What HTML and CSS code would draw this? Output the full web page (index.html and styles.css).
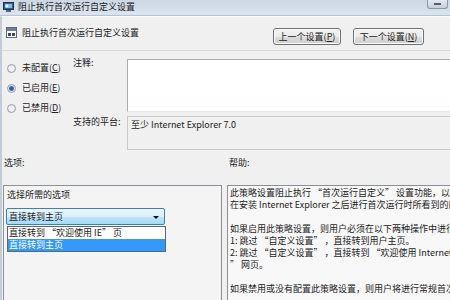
FILE: index.html
```html
<!DOCTYPE html>
<html lang="zh-CN">
<head>
    <meta charset="UTF-8">
    <meta name="viewport" content="width=device-width, initial-scale=1.0">
    <title>阻止执行首次运行自定义设置</title>
    <link rel="stylesheet" href="styles.css">
</head>
<body>
    <div class="titlebar">
        <svg class="app-icon" width="11" height="10" viewBox="0 0 11 10">
            <rect x="0.5" y="0.5" width="10" height="7" fill="#2f5d9a" stroke="#1d3556"/>
            <rect x="2" y="2" width="7" height="4" fill="#8fb7e6"/>
            <circle cx="4" cy="4" r="1.4" fill="#f2f2f2"/>
            <rect x="3" y="8" width="5" height="2" fill="#56647a"/>
        </svg>
        <span class="title">阻止执行首次运行自定义设置</span>
        <span class="min-btn"><span class="dash"></span></span>
    </div>

    <div class="window">
        <div class="header">
            <svg class="policy-icon" width="11" height="11" viewBox="0 0 11 11">
                <rect x="0.5" y="0.5" width="10" height="10" fill="#ffffff" stroke="#5a6a80"/>
                <rect x="1" y="1" width="9" height="3" fill="#6d7f96"/>
                <rect x="2" y="6" width="3" height="3" fill="#3b4a60"/>
                <rect x="6" y="6" width="3" height="3" fill="#3b4a60"/>
            </svg>
            <span class="header-title">阻止执行首次运行自定义设置</span>
            <div class="nav">
                <button class="nav-btn prev">上一个设置(<u>P</u>)</button>
                <button class="nav-btn next">下一个设置(<u>N</u>)</button>
            </div>
        </div>

        <div class="settings">
            <div class="states">
                <label class="radio"><span class="dot"></span><span class="radio-text">未配置(<u>C</u>)</span></label>
                <label class="radio checked"><span class="dot"></span><span class="radio-text">已启用(<u>E</u>)</span></label>
                <label class="radio"><span class="dot"></span><span class="radio-text">已禁用(<u>D</u>)</span></label>
            </div>
            <div class="fields">
                <div class="field-label first">注释:</div>
                <div class="comment"></div>
                <div class="field-label">支持的平台:</div>
                <div class="platform">至少 Internet Explorer 7.0</div>
            </div>
        </div>

        <div class="panes">
            <div class="pane options-pane">
                <div class="pane-label">选项:</div>
                <div class="pane-box options">
                    <div class="option-label">选择所需的选项</div>
                    <div class="combo">
                        <span class="combo-text">直接转到主页</span>
                        <span class="arrow"></span>
                        <ul class="combo-list">
                            <li>直接转到 “欢迎使用 IE” 页</li>
                            <li class="selected">直接转到主页</li>
                        </ul>
                    </div>
                </div>
            </div>
            <div class="pane help-pane">
                <div class="pane-label">帮助:</div>
                <div class="pane-box help">
                    <p>此策略设置阻止执行 “首次运行自定义” 设置功能，以及控制新用户</p>
                    <p>在安装 Internet Explorer 之后进行首次运行时所看到的内容。</p>
                    <p>&nbsp;</p>
                    <p>如果启用此策略设置，则用户必须在以下两种操作中进行选择：</p>
                    <p>1: 跳过 “自定义设置” ，直接转到用户主页。</p>
                    <p>2: 跳过 “自定义设置” ，直接转到 “欢迎使用 Internet Explorer</p>
                    <p>” 网页。</p>
                    <p>&nbsp;</p>
                    <p>如果禁用或没有配置此策略设置，则用户将进行常规首次运行</p>
                </div>
            </div>
        </div>
    </div>
</body>
</html>
```

FILE: styles.css
```css
html, body {
    margin: 0;
    width: 450px;
    height: 300px;
    overflow: hidden;
}
body {
    background-color: #f0f0f0;
    font-family: "Noto Sans CJK SC", "Noto Sans", sans-serif;
    font-size: 9px;
    line-height: 12px;
    color: #222;
}
u {
    text-decoration: underline;
}

/* title bar */
.titlebar {
    display: flex;
    align-items: flex-start;
    height: 15px;
    background: linear-gradient(#cdd8e4, #dbe4ee);
    border-bottom: 1px solid #b7c3d0;
}
.app-icon {
    margin: 2px 0 0 3px;
}
.title {
    margin: 1px 0 0 4px;
    color: #1a1a1a;
}
.min-btn {
    display: flex;
    justify-content: center;
    align-items: center;
    margin-left: auto;
    margin-right: 2px;
    width: 19px;
    height: 8px;
    border: 1px solid #8a97a6;
    border-top: none;
    border-radius: 0 0 3px 3px;
    background: linear-gradient(#e3e9f0, #c6d0dc);
}
.dash {
    width: 7px;
    height: 2px;
    background-color: #ffffff;
    border: 1px solid #55606e;
    box-sizing: border-box;
}

/* window body */
.window {
    border-left: 2px solid #c3cdd9;
    border-top: 1px solid #f7f9fb;
    height: 284px;
}
.header {
    display: flex;
    align-items: flex-start;
    height: 33px;
    border-bottom: 1px solid #d9d9d9;
}
.policy-icon {
    margin: 10px 0 0 4px;
}
.header-title {
    margin: 10px 0 0 5px;
}
.nav {
    display: flex;
    gap: 12px;
    margin: 11px 26px 0 auto;
}
.nav-btn {
    height: 17px;
    padding: 0;
    font-family: inherit;
    font-size: 9px;
    line-height: 12px;
    color: #222;
    border: 1px solid #707070;
    border-radius: 3px;
    background: linear-gradient(#f2f2f2 0%, #ebebeb 50%, #dddddd 51%, #cfcfcf 100%);
    box-shadow: inset 0 0 0 1px #fcfcfc;
}
.prev {
    width: 68px;
}
.next {
    width: 71px;
}

/* state radios and fields */
.settings {
    display: flex;
    padding-top: 8px;
}
.states {
    flex: none;
    display: flex;
    flex-direction: column;
    width: 66px;
    padding-left: 5px;
    margin-top: -1px;
}
.radio {
    display: flex;
    align-items: center;
    gap: 6px;
    height: 20px;
    white-space: nowrap;
}
.dot {
    flex: none;
    width: 7px;
    height: 7px;
    border-radius: 50%;
    border: 1px solid #9aa0a8;
    background: radial-gradient(#ffffff, #dcdfe3);
}
.checked .dot {
    background: radial-gradient(circle, #1f4a8a 0, #3c6fb8 2px, #dfe6ef 3px);
}
.fields {
    flex: none;
    display: grid;
    grid-template-columns: 54px 330px;
    row-gap: 4px;
}
.field-label.first {
    margin-top: -2px;
}
.comment {
    height: 51px;
    background-color: #ffffff;
    border: 1px solid #abadb3;
    border-bottom-color: #e3e9ef;
}
.platform {
    height: 28px;
    padding: 2px 3px;
    background-color: #f0f0f0;
    border: 1px solid #c9c9c9;
}

/* options and help panes */
.panes {
    display: flex;
    gap: 5px;
    padding: 7px 0 0 1px;
}
.pane {
    flex: none;
}
.pane-label {
    padding-left: 1px;
    margin-bottom: 16px;
}
.help-pane .pane-label {
    padding-left: 2px;
}
.pane-box {
    height: 120px;
    border: 1px solid #8c9096;
}
.options {
    width: 219px;
    padding: 3px 0 0 3px;
    box-sizing: border-box;
    background-color: #f4f4f4;
}
.option-label {
    margin-bottom: 7px;
}
.combo {
    position: relative;
    display: flex;
    align-items: center;
    width: 159px;
    height: 17px;
    margin-left: -1px;
    box-sizing: border-box;
    border: 1px solid #3c7fb1;
    border-radius: 2px;
    background: linear-gradient(#eaf6fd 0%, #d9f0fc 50%, #bee6fd 51%, #a7d9f5 100%);
}
.combo-text {
    padding-left: 2px;
}
.arrow {
    margin: 1px 5px 0 auto;
    border-left: 3px solid transparent;
    border-right: 3px solid transparent;
    border-top: 3px solid #111;
}
.combo-list {
    position: absolute;
    top: 17px;
    left: 0;
    width: 159px;
    box-sizing: border-box;
    margin: 0;
    padding: 0;
    list-style: none;
    background-color: #ffffff;
    border: 1px solid #646464;
}
.combo-list li {
    height: 12px;
    padding-left: 1px;
}
.combo-list .selected {
    background-color: #3399ff;
    color: #ffffff;
}
.help {
    width: 260px;
    padding: 1px 0 0 2px;
    background-color: #f8f8f8;
    white-space: nowrap;
    overflow: hidden;
}
.help p {
    margin: 0;
}
```
